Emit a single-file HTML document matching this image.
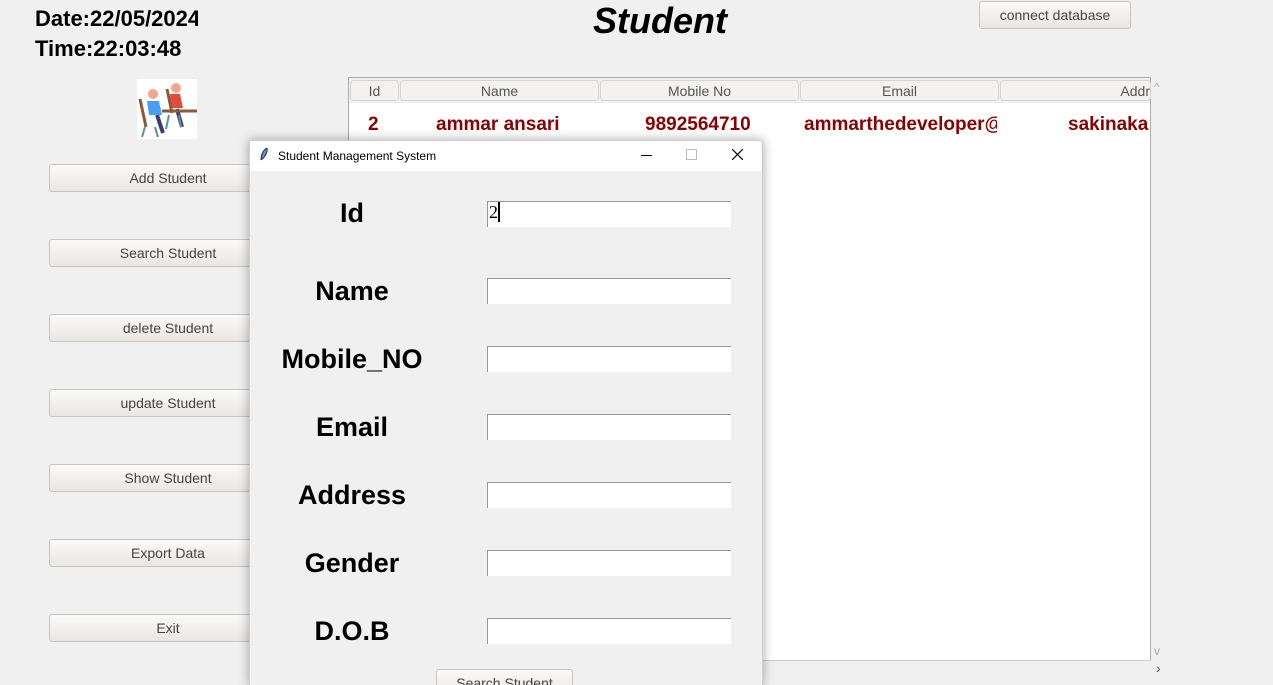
<!DOCTYPE html><html><head><style>
html,body{margin:0;width:1273px;height:685px;overflow:hidden}
body{background:#f0f0f0;position:relative;font-family:"Liberation Sans",sans-serif}
.a{position:absolute}
.btn{position:absolute;left:49px;width:236px;height:26px;border:1px solid #c8c4c0;border-radius:3px;background:linear-gradient(#fbfaf9,#e9e6e3);color:#444;font-size:14px;text-align:center;line-height:26px}
.th{position:absolute;top:80px;height:21px;border:1px solid #d8d4cf;border-radius:4px;background:#f3f2f0;color:#555;font-size:14px;text-align:center;line-height:21px;box-sizing:border-box}
.td{position:absolute;top:114px;color:#8b0000;font-weight:bold;font-size:19px;white-space:nowrap}
.lb{position:absolute;width:200px;left:252px;text-align:center;font-weight:bold;font-size:27px;color:#000}
.en{position:absolute;left:487px;width:243px;height:25px;background:#fff;border-top:1px solid #999;border-left:1px solid #999}
</style></head><body>
<div class="a" style="left:35px;top:6px;font-weight:bold;font-size:22px;width:163px;overflow:hidden;white-space:nowrap">Date:22/05/2024</div>
<div class="a" style="left:35px;top:36px;font-weight:bold;font-size:22px">Time:22:03:48</div>
<div class="a" style="left:593px;top:0px;font-weight:bold;font-style:italic;font-size:36px">Student</div>
<div class="btn" style="left:979px;top:1px;width:150px;height:26px">connect database</div>
<svg class="a" style="left:137px;top:79px" width="60" height="60"><rect width="60" height="60" fill="#fff"/><circle cx="16" cy="15" r="5" fill="#f4a58a"/><circle cx="39" cy="9" r="5" fill="#f4a58a"/><path d="M10 22h12l3 14H12z" fill="#4a9ef2"/><path d="M33 15h10l3 14H34z" fill="#e24c3a"/><path d="M20 36l6 18M40 30l5 18" stroke="#3b3f73" stroke-width="4"/><path d="M3 20l6 28M25 32h36M30 10l5 24" stroke="#8b5a3a" stroke-width="3"/><path d="M8 48l-3 10M18 48l3 10M32 36l-3 14M42 36l2 12" stroke="#5c8fa0" stroke-width="2"/></svg>
<div class="btn" style="top:164px">Add Student</div>
<div class="btn" style="top:239px">Search Student</div>
<div class="btn" style="top:314px">delete Student</div>
<div class="btn" style="top:389px">update Student</div>
<div class="btn" style="top:464px">Show Student</div>
<div class="btn" style="top:539px">Export Data</div>
<div class="btn" style="top:614px">Exit</div>
<div class="a" style="left:348px;top:77px;width:801px;height:582px;background:#fff;border:1px solid #aaa;border-bottom-color:#ccc"></div>
<div class="a" style="left:349px;top:78px;width:801px;height:25px;background:#f0f0f0"></div>
<div class="th" style="left:350px;width:49px">Id</div>
<div class="th" style="left:400px;width:199px">Name</div>
<div class="th" style="left:600px;width:199px">Mobile No</div>
<div class="th" style="left:800px;width:199px">Email</div>
<div class="th" style="left:1000px;width:151px;text-align:right;overflow:hidden">Addr</div>
<div class="td" style="left:368px">2</div>
<div class="td" style="left:436px">ammar ansari</div>
<div class="td" style="left:645px">9892564710</div>
<div class="td" style="left:804px;width:193px;overflow:hidden">ammarthedeveloper@</div>
<div class="td" style="left:1068px;width:82px;overflow:hidden">sakinaka</div>
<div class="a" style="left:1154px;top:80px;color:#aaa;font-size:12px">^</div>
<div class="a" style="left:1154px;top:644px;color:#aaa;font-size:12px">v</div>
<div class="a" style="left:1156px;top:660px;color:#555;font-size:14px">›</div>
<div class="a" style="left:249px;top:140px;width:512px;height:545px;background:#f0f0f0;box-shadow:0 0 10px rgba(0,0,0,.35);border:1px solid #d0d0d0;border-bottom:none"></div>
<div class="a" style="left:250px;top:141px;width:511px;height:30px;background:#fff"></div>
<svg class="a" style="left:259px;top:147px" width="10" height="15"><path d="M8 1C4 3 2 8 2 13M8 1C9 5 6 10 2 13" stroke="#234" fill="#6a8fd0" stroke-width="1"/></svg>
<div class="a" style="left:278px;top:149px;font-size:12px;color:#000">Student Management System</div>
<div class="a" style="left:641px;top:155px;width:11px;height:1px;background:#000"></div>
<div class="a" style="left:686px;top:149px;width:9px;height:9px;border:1px solid #bbb"></div>
<svg class="a" style="left:732px;top:149px" width="11" height="11"><path d="M0 0L11 11M11 0L0 11" stroke="#000" stroke-width="1.2"/></svg>
<div class="lb" style="top:198px">Id</div>
<div class="lb" style="top:276px">Name</div>
<div class="lb" style="top:344px">Mobile_NO</div>
<div class="lb" style="top:412px">Email</div>
<div class="lb" style="top:480px">Address</div>
<div class="lb" style="top:548px">Gender</div>
<div class="lb" style="top:616px">D.O.B</div>
<div class="en" style="top:201px"><span style="font-size:18px;font-family:'Liberation Serif';padding-left:1px;border-right:2px solid #000">2</span></div>
<div class="en" style="top:278px"></div>
<div class="en" style="top:346px"></div>
<div class="en" style="top:414px"></div>
<div class="en" style="top:482px"></div>
<div class="en" style="top:550px"></div>
<div class="en" style="top:618px"></div>
<div class="btn" style="left:436px;top:669px;width:135px">Search Student</div>
</body></html>
